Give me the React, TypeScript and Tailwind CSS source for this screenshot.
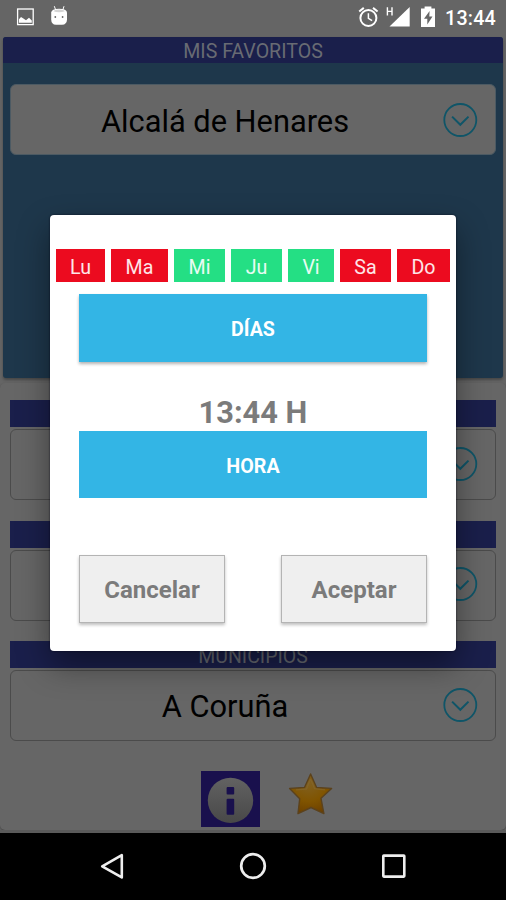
import React from "react";

function Chevron() {
  return (
    <svg className="block h-[36px] w-[36px] shrink-0" viewBox="0 0 36 36" fill="none" stroke="#0f5568" strokeWidth="1.8">
      <circle cx="18.3" cy="18" r="16" />
      <path d="M10.1 14.6 L18.3 22.8 L26.5 14.6" strokeWidth="2" />
    </svg>
  );
}

function Selector({ label, favorite = false }: { label: string; favorite?: boolean }) {
  return (
    <div
      className={
        favorite
          ? "flex h-[71px] items-center rounded-[6px] border border-[#4c5a63] bg-[#666] pr-[17px]"
          : "flex h-[71px] items-center rounded-[6px] border border-[#4b4b4b] bg-[#666] pr-[17px] pb-[2px]"
      }
    >
      <span className="flex-1 pt-[5px] pr-[3px] text-center text-[30.8px] leading-[40px] whitespace-pre text-black">{label}</span>
      <Chevron />
    </div>
  );
}

function Section({ title, value }: { title: string; value: string }) {
  return (
    <section className="h-[120.5px]">
      <h2 className="h-[27px] bg-[#1a1f4b] text-center text-[19.5px] leading-[31px] text-[#686b73]">{title}</h2>
      <div className="pt-[2px]">
        <Selector label={value} />
      </div>
    </section>
  );
}

function StatusBar() {
  return (
    <header className="flex h-[37px] items-center justify-between">
      <svg className="block h-[37px] w-[80px]" viewBox="0 0 80 37">
        <rect x="17.6" y="9" width="15.6" height="15.6" fill="none" stroke="#fff" strokeWidth="1.3" />
        <path d="M19 22.8 V19.2 L21 17 L23.4 18.5 L26 20.3 L29 17.8 L31.8 20.4 V22.8 Z" fill="#fff" />
        <path d="M54.3 6.2 L55.7 10 M64 6.2 L62.8 10" stroke="#fff" strokeWidth="1" />
        <path d="M51.2 12.5 Q51.5 8.8 59 8.7 Q66.8 8.8 67 12.5 V19.5 Q66.8 24.6 62 24.8 H56 Q51.3 24.6 51.2 19.5 Z" fill="#fff" />
        <path d="M53.5 11.3 Q54.5 9.5 59 9.4 Q63.8 9.5 64.8 11.3 Q62 12.3 59 12.3 Q56 12.3 53.5 11.3 Z" fill="#d4d4d4" />
        <circle cx="55.3" cy="17" r="0.9" fill="#666" />
        <circle cx="62.6" cy="17" r="0.9" fill="#666" />
      </svg>
      <div className="flex items-center pr-[10px]">
        <svg className="block h-[37px] w-[87px]" viewBox="0 0 87 37">
          <g fill="none" stroke="#fff" strokeWidth="2">
            <circle cx="10.4" cy="18" r="8" />
            <path d="M1.2 11.5 L5.8 7.9 M15 7.9 L19.6 11.5" />
            <path d="M10.4 13.2 V18.3 L14.1 20.7" strokeWidth="1.5" />
          </g>
          <path d="M29.4 7.2 V15.6 M34 7.2 V15.6 M29.4 11.4 H34" stroke="#fff" strokeWidth="1.4" />
          <path d="M51.7 7 V26.5 H31.5 Z" fill="#fff" />
          <path d="M63 8.6 H66.6 V6.4 H73.4 V8.6 H77 V27 H63 Z" fill="#fff" />
          <path d="M71.6 11 L66 18.7 H69.3 V24.5 L74.5 16.5 H71.3 Z" fill="#666" />
        </svg>
        <time className="text-[19.7px] leading-[37px] font-medium tracking-[0.2px] text-white">13:44</time>
      </div>
    </header>
  );
}

const days = [
  { name: "Lu", style: "w-[49px] bg-[#ec0b1f]" },
  { name: "Ma", style: "w-[57px] bg-[#ec0b1f]" },
  { name: "Mi", style: "w-[51px] bg-[#24df84]" },
  { name: "Ju", style: "w-[51px] bg-[#24df84]" },
  { name: "Vi", style: "w-[46px] bg-[#24df84]" },
  { name: "Sa", style: "w-[51px] bg-[#ec0b1f]" },
  { name: "Do", style: "w-[53px] bg-[#ec0b1f]" },
];

function AlarmDialog() {
  return (
    <div
      role="dialog"
      className="absolute top-[215px] left-[50px] h-[436px] w-[406px] rounded-[4px] bg-white pt-[34px] shadow-[0_0_2px_rgba(0,0,20,0.8),0_14px_32px_rgba(0,0,0,0.42)]"
    >
      <div className="flex justify-between px-[6px]">
        {days.map((day) => (
          <span key={day.name} className={`${day.style} h-[33px] text-center text-[19.6px] leading-[37px] text-white/90`}>
            {day.name}
          </span>
        ))}
      </div>
      <div className="px-[29px] pt-[12px]">
        <button className="block h-[68px] w-full bg-[#33b5e5] pt-[3px] text-[19.6px] font-bold text-white shadow-[0_2px_3px_rgba(0,0,0,0.3)]">DÍAS</button>
        <p className="mt-[32px] h-[37px] text-center text-[30.8px] leading-[37px] font-bold text-[#7b7b7b]">13:44 H</p>
        <button className="block h-[67px] w-full bg-[#33b5e5] pt-[4px] text-[19.7px] font-bold text-white">HORA</button>
        <div className="flex justify-between pt-[57px]">
          <button className="h-[68px] w-[146px] border border-[#b4b4b4] bg-[#efefef] pt-[2px] text-[24px] font-bold text-[#7b7b7b] shadow-[0_2px_3px_rgba(0,0,0,0.25)]">Cancelar</button>
          <button className="h-[68px] w-[146px] border border-[#b4b4b4] bg-[#efefef] pt-[2px] text-[24px] font-bold text-[#7b7b7b] shadow-[0_2px_3px_rgba(0,0,0,0.25)]">Aceptar</button>
        </div>
      </div>
    </div>
  );
}

export default function App() {
  return (
    <div className="relative flex h-[900px] w-[506px] flex-col overflow-hidden bg-[#656565] font-[Roboto,sans-serif]">
      <StatusBar />
      <section className="mx-[3px] h-[341px] shrink-0 overflow-hidden rounded-[3px] bg-[#1e374b] shadow-[0_2px_3px_rgba(0,0,0,0.3)]">
        <h1 className="h-[26px] bg-[#1a1f4b] text-center text-[19.6px] leading-[29px] text-[#686b73]">MIS FAVORITOS</h1>
        <div className="px-[7px] pt-[21px]">
          <Selector label="Alcalá de Henares" favorite />
        </div>
      </section>
      <main className="mt-[5px] h-[447px] shrink-0 rounded-[5px] bg-[#666] px-[10px] pt-[17px] shadow-[0_1px_2px_rgba(0,0,0,0.35)]">
        <Section title="" value="" />
        <Section title="" value="" />
        <Section title="MUNICIPIOS" value="A Coruña" />
        <div className="flex pt-[9px] pl-[191px]">
          <svg className="block h-[56px] w-[136px]" viewBox="0 0 136 56">
            <defs>
              <linearGradient id="disc" x2="0" y2="1">
                <stop stopColor="#626262" />
                <stop offset="1" stopColor="#484848" />
              </linearGradient>
              <radialGradient id="gold" cx="0.45" cy="0.25" r="0.8">
                <stop stopColor="#806020" />
                <stop offset="0.55" stopColor="#805400" />
                <stop offset="1" stopColor="#6a3e00" />
              </radialGradient>
            </defs>
            <rect width="59" height="56" fill="#19104d" />
            <circle cx="29.5" cy="29.4" r="22.7" fill="url(#disc)" />
            <rect x="25.6" y="16" width="7.6" height="7.6" rx="1" fill="#19104d" />
            <rect x="25.6" y="27.7" width="7.6" height="16" rx="1" fill="#19104d" />
            <path d="M109.6 3 L115.6 16.5 L130.6 17.4 L120 27.3 L122.9 42.6 L110 36.5 L97 42.6 L98.7 27.8 L88.6 17.4 L103.5 16.5 Z" fill="url(#gold)" stroke="#5b421d" strokeWidth="1.4" strokeLinejoin="round" />
            <path d="M109.5 8 L113.5 17.6 L124 18.8 M109.5 8 L105.5 18 L95 18.8" fill="none" stroke="#826733" strokeOpacity="0.6" strokeWidth="1.3" strokeLinejoin="round" />
          </svg>
        </div>
      </main>
      <div className="h-[3px] shrink-0 bg-[#5a5a5a]" />
      <nav className="flex h-[67px] shrink-0 items-center justify-center gap-[101px] bg-black pb-[1px]">
        <svg className="block h-[40px] w-[40px]" viewBox="0 0 40 40" fill="none" stroke="#eee" strokeWidth="2.6" strokeLinejoin="round">
          <path d="M10.2 20.3 L29.8 9.2 V31.4 Z" />
        </svg>
        <svg className="block h-[40px] w-[40px]" viewBox="0 0 40 40" fill="none" stroke="#eee" strokeWidth="2.7">
          <circle cx="20" cy="20" r="11.8" />
        </svg>
        <svg className="block h-[40px] w-[40px]" viewBox="0 0 40 40" fill="none" stroke="#eee" strokeWidth="2.6">
          <rect x="9.3" y="9.6" width="21" height="21" rx="0.5" />
        </svg>
      </nav>
      <AlarmDialog />
    </div>
  );
}
